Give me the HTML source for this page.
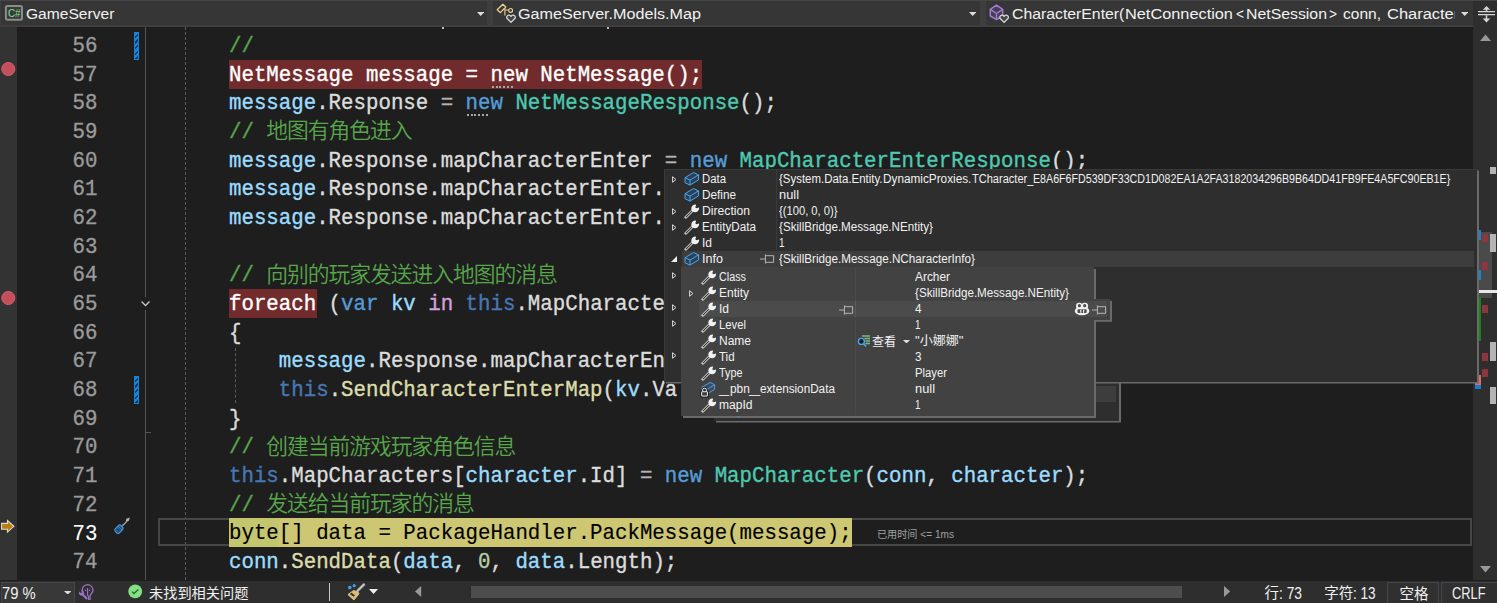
<!DOCTYPE html>
<html lang="zh"><head><meta charset="utf-8"><title>GameServer</title>
<style>
html,body{margin:0;padding:0}
body{width:1497px;height:603px;overflow:hidden;background:#1e1e1e;position:relative;font-family:"Liberation Sans","Noto Sans CJK SC",sans-serif}
body>div,body>span,body>svg{position:absolute;display:block}
.s{white-space:pre;transform-origin:0 50%;font-family:"Liberation Sans","Noto Sans CJK SC",sans-serif}
.m{white-space:pre;font-family:"Liberation Mono","Noto Sans CJK SC",monospace;font-size:20.75px;line-height:28.667px;height:28.667px;color:#dcdcdc;transform:scaleY(1.08);transform-origin:0 19.85px;-webkit-text-stroke:0.35px currentColor}
.ln{color:#9a9a9a}
.c{color:#57a64a}.k{color:#569cd6}.k2{color:#4677b2}.t{color:#4ec9b0}.v{color:#9cdcfe}.f{color:#dcdcaa}.p{color:#b4b4b4}.q{color:#d8a0df}.n{color:#b5cea8}.w{color:#ffffff}.b{color:#000000}
.zc{white-space:pre;font-family:"Liberation Mono","Noto Sans CJK SC",monospace;font-size:21.8px;letter-spacing:-1.05px;line-height:28.667px;height:28.667px;color:#57a64a;font-weight:350}

</style></head>
<body>
<div style="left:0px;top:27px;width:17px;height:553px;background:#333333;"></div>
<div style="left:1473px;top:27px;width:24px;height:553px;background:#2e2e2e;"></div>
<div style="left:145px;top:27px;width:1px;height:270px;background:#555555;"></div>
<div style="left:145px;top:310px;width:1px;height:270px;background:#555555;"></div>
<div style="left:145px;top:432px;width:6px;height:1px;background:#555555;"></div>
<svg style="left:139px;top:298px" width="13" height="12" viewBox="0 0 13 12"><path d="M2.5 3.5 L6.5 7.5 L10.5 3.5" fill="none" stroke="#c8c8c8" stroke-width="1.3"/></svg>
<div style="left:185px;top:27px;width:0;height:553px;border-left:1px dashed #5a5a5a"></div>
<div style="left:235px;top:347.7px;width:0;height:55.3px;border-left:1px dashed #5a5a5a"></div>
<div style="left:134px;top:32.0px;width:5px;height:27.7px;background:repeating-linear-gradient(135deg,#1583d8 0 2.2px,#0b3a63 2.2px 4px);border:1px solid #1583d8;box-sizing:border-box"></div>
<div style="left:134px;top:376.0px;width:5px;height:27.7px;background:repeating-linear-gradient(135deg,#1583d8 0 2.2px,#0b3a63 2.2px 4px);border:1px solid #1583d8;box-sizing:border-box"></div>
<div style="left:229px;top:60.0px;width:473px;height:28.667px;background:#722b2c;"></div>
<div style="left:229px;top:289.336px;width:87.64999999999999px;height:28.667px;background:#722b2c;"></div>
<div style="left:157.6px;top:518.1px;width:1314px;height:28px;border:2px solid #464646;box-sizing:border-box"></div>
<div style="left:229px;top:517.8px;width:622.5px;height:28.9px;background:#cdc673;"></div>
<div style="left:229px;top:517.8px;width:49.8px;height:28.9px;background:#c4c66f;"></div>
<div class="m" style="left:72.5px;top:4.27px;color:#9a9a9a;">55</div>
<div class="m" style="left:72.5px;top:32.93px;color:#9a9a9a;">56</div>
<div class="m" style="left:72.5px;top:61.60px;color:#9a9a9a;">57</div>
<div class="m" style="left:72.5px;top:90.27px;color:#9a9a9a;">58</div>
<div class="m" style="left:72.5px;top:118.93px;color:#9a9a9a;">59</div>
<div class="m" style="left:72.5px;top:147.60px;color:#9a9a9a;">60</div>
<div class="m" style="left:72.5px;top:176.27px;color:#9a9a9a;">61</div>
<div class="m" style="left:72.5px;top:204.94px;color:#9a9a9a;">62</div>
<div class="m" style="left:72.5px;top:233.60px;color:#9a9a9a;">63</div>
<div class="m" style="left:72.5px;top:262.27px;color:#9a9a9a;">64</div>
<div class="m" style="left:72.5px;top:290.94px;color:#9a9a9a;">65</div>
<div class="m" style="left:72.5px;top:319.60px;color:#9a9a9a;">66</div>
<div class="m" style="left:72.5px;top:348.27px;color:#9a9a9a;">67</div>
<div class="m" style="left:72.5px;top:376.94px;color:#9a9a9a;">68</div>
<div class="m" style="left:72.5px;top:405.60px;color:#9a9a9a;">69</div>
<div class="m" style="left:72.5px;top:434.27px;color:#9a9a9a;">70</div>
<div class="m" style="left:72.5px;top:462.94px;color:#9a9a9a;">71</div>
<div class="m" style="left:72.5px;top:491.61px;color:#9a9a9a;">72</div>
<div class="m" style="left:72.5px;top:521.07px;color:#ffffff;-webkit-text-stroke:0.1px #fff;">73</div>
<div class="m" style="left:72.5px;top:548.94px;color:#9a9a9a;">74</div>
<div class="m" style="left:72.5px;top:577.61px;color:#9a9a9a;">75</div>
<div class="m" style="left:229px;top:32.93px"><span class="c">//</span></div>
<div class="m" style="left:229px;top:61.60px"><span class="w">NetMessage message = new NetMessage();</span></div>
<div class="m" style="left:229px;top:90.27px"><span class="v">message</span>.Response <span class="p">=</span> <span class="k">new</span> <span class="t">NetMessageResponse</span>();</div>
<div class="m" style="left:229px;top:118.93px"><span class="c">//</span></div>
<div class="zc" style="left:266.35px;top:119.33px">地图有角色进入</div>
<div class="m" style="left:229px;top:147.60px"><span class="v">message</span>.Response.mapCharacterEnter <span class="p">=</span> <span class="k">new</span> <span class="t">MapCharacterEnterResponse</span>();</div>
<div class="m" style="left:229px;top:176.27px"><span class="v">message</span>.Response.mapCharacterEnter.mapId <span class="p">=</span> <span class="k2">this</span>.Define.ID;</div>
<div class="m" style="left:229px;top:204.94px"><span class="v">message</span>.Response.mapCharacterEnter.Characters.Add(<span class="v">character</span>.Info);</div>
<div class="m" style="left:229px;top:262.27px"><span class="c">//</span></div>
<div class="zc" style="left:266.35px;top:262.67px">向别的玩家发送进入地图的消息</div>
<div class="m" style="left:229px;top:290.94px"><span class="w">foreach</span> (<span class="k">var</span> <span class="v">kv</span> <span class="q">in</span> <span class="k2">this</span>.MapCharacters)</div>
<div class="m" style="left:229px;top:319.60px">{</div>
<div class="m" style="left:229px;top:348.27px">    <span class="v">message</span>.Response.mapCharacterEnter.Characters.Add(<span class="v">kv</span>.Value.Info);</div>
<div class="m" style="left:229px;top:376.94px">    <span class="k2">this</span>.<span class="f">SendCharacterEnterMap</span>(<span class="v">kv</span>.Value.connection, <span class="v">character</span>);</div>
<div class="m" style="left:229px;top:405.60px">}</div>
<div class="m" style="left:229px;top:434.27px"><span class="c">//</span></div>
<div class="zc" style="left:266.35px;top:434.67px">创建当前游戏玩家角色信息</div>
<div class="m" style="left:229px;top:462.94px"><span class="k2">this</span>.MapCharacters[<span class="v">character</span>.Id] <span class="p">=</span> <span class="k">new</span> <span class="t">MapCharacter</span>(<span class="v">conn</span>, <span class="v">character</span>);</div>
<div class="m" style="left:229px;top:491.61px"><span class="c">//</span></div>
<div class="zc" style="left:266.35px;top:492.00px">发送给当前玩家的消息</div>
<div class="m" style="left:229px;top:520.27px"><span class="b" style="-webkit-text-stroke:0.15px #000">byte[] data = PackageHandler.PackMessage(message);</span></div>
<div class="m" style="left:229px;top:548.94px"><span class="v">conn</span>.<span class="f">SendData</span>(<span class="v">data</span>, <span class="n">0</span>, <span class="v">data</span>.Length);</div>
<div style="left:491.7px;top:86px;width:22.4px;height:2px;background:repeating-linear-gradient(90deg,#a8a8a8 0 2px,transparent 2px 3.72px)"></div>
<div style="left:466.7px;top:114.4px;width:22.4px;height:2px;background:repeating-linear-gradient(90deg,#a8a8a8 0 2px,transparent 2px 3.72px)"></div>
<span class="s" style="left:877px;top:526.70px;font-size:10px;line-height:15px;color:#a0a0a0;transform:scaleX(1.0115);">已用时间 &lt;= 1ms</span>
<svg style="left:0px;top:60.5px" width="17" height="16" viewBox="0 0 17 16"><circle cx="8.3" cy="8" r="6.5" fill="#c44f5c" stroke="#e25c6a" stroke-width="1"/></svg>
<svg style="left:0px;top:289.8px" width="17" height="16" viewBox="0 0 17 16"><circle cx="8.3" cy="8" r="6.5" fill="#c44f5c" stroke="#e25c6a" stroke-width="1"/></svg>
<svg style="left:0px;top:519px" width="16" height="16" viewBox="0 0 16 16"><path d="M1.6 4.4 H7.5 V1.5 L13.9 7.3 L7.5 13.1 V10.2 H1.6 Z" fill="#b8800a" stroke="#dedbd0" stroke-width="1.1" stroke-linejoin="miter"/></svg>
<svg style="left:110px;top:514px" width="24" height="24" viewBox="110 514 24 24"><path d="M122.4 525.8 L126.9 521.4" stroke="#a8a8a8" stroke-width="1.3" fill="none"/><g transform="translate(127.8 519.6) rotate(-45)"><path d="M-2.9 0 L-0.4 -1.7 L2.9 0 L-0.4 1.7 Z" fill="#b8b8b8"/></g><g transform="translate(118.95 529.2) rotate(-45)"><rect x="-4.1" y="-2.9" width="8.2" height="5.8" rx="1.9" fill="#23527c" stroke="#4a9be0" stroke-width="1.1"/><path d="M1.5 -2.9 V2.9" stroke="#4a9be0" stroke-width="0.6"/></g></svg>
<div style="left:441.5px;top:27px;width:2px;height:1.5px;background:#bdbdbd;"></div>
<div style="left:606.5px;top:27px;width:2.5px;height:1.8px;background:#bdbdbd;"></div>
<div style="left:0px;top:0px;width:1497px;height:27px;background:#3e3e3e;"></div>
<div style="left:0px;top:0px;width:1497px;height:1px;background:#454545;"></div>
<div style="left:1px;top:1px;width:486px;height:24px;background:#363636;"></div>
<div style="left:493px;top:1px;width:487px;height:24px;background:#363636;"></div>
<div style="left:986px;top:1px;width:487px;height:24px;background:#363636;"></div>
<div style="left:1473px;top:1px;width:24px;height:26px;background:#2e2e2e;"></div>
<svg style="left:476.5px;top:11.5px" width="7.4" height="4" viewBox="0 0 7.4 4"><path d="M0 0 H7.4 L3.7 4 Z" fill="#dcdcdc"/></svg>
<svg style="left:969px;top:11.5px" width="7.4" height="4" viewBox="0 0 7.4 4"><path d="M0 0 H7.4 L3.7 4 Z" fill="#dcdcdc"/></svg>
<svg style="left:1461px;top:11.5px" width="7.4" height="4" viewBox="0 0 7.4 4"><path d="M0 0 H7.4 L3.7 4 Z" fill="#dcdcdc"/></svg>
<svg style="left:3px;top:3px" width="22" height="20" viewBox="3 3 22 20"><rect x="5.9" y="5.9" width="16.1" height="13.8" rx="1.6" fill="#3a3a3a" stroke="#8c8c8c" stroke-width="2"/><text x="7.9" y="17" font-family="Liberation Sans, sans-serif" font-size="11.4" fill="#7ee08a" textLength="12.6" lengthAdjust="spacingAndGlyphs">C#</text></svg>
<span class="s" style="left:26px;top:2.20px;font-size:15.4px;line-height:23px;color:#f1f1f1;transform:scaleX(1.0126);">GameServer</span>
<svg style="left:495px;top:2px" width="24" height="24" viewBox="495 2 24 24"><path d="M497.2 9.75 L502.9 4.3 L505.8 7 L500.3 12.6 Z" fill="none" stroke="#f0d590" stroke-width="1.25" stroke-linejoin="round"/><path d="M504.9 8.6 V15.6 M505.6 10 H508.4" stroke="#f0d590" stroke-width="1.1" fill="none"/><circle cx="510.6" cy="10.4" r="1.9" fill="none" stroke="#f0d590" stroke-width="1.2"/><g transform="translate(505.9 14.4)"><path d="M5.1 8 L1 3.9 A2.2 2.2 0 0 1 5.1 2.1 A2.2 2.2 0 0 1 9.2 3.9 Z" fill="#454545" stroke="#d8d8d8" stroke-width="1.3" stroke-linejoin="round"/></g></svg>
<span class="s" style="left:518px;top:2.20px;font-size:15.4px;line-height:23px;color:#f1f1f1;transform:scaleX(1.0487);">GameServer.Models.Map</span>
<svg style="left:988px;top:2px" width="24" height="24" viewBox="988 2 24 24"><path d="M996.5 5.2 L1002.7 9.3 V16 L996.5 19.6 L990.3 16 V9.3 Z" fill="#463f54" stroke="#a07bd0" stroke-width="1.5" stroke-linejoin="round"/><path d="M990.3 9.3 L996.5 13.5 L1002.7 9.3 M996.5 13.5 V19.6" fill="none" stroke="#a07bd0" stroke-width="1.5" stroke-linejoin="round"/><g transform="translate(999 14.4)"><path d="M5.1 8 L1 3.9 A2.2 2.2 0 0 1 5.1 2.1 A2.2 2.2 0 0 1 9.2 3.9 Z" fill="#454545" stroke="#d8d8d8" stroke-width="1.3" stroke-linejoin="round"/></g></svg>
<div style="left:1000px;top:1px;width:454.6px;height:25px;overflow:hidden"><span class="s" style="position:absolute;left:11.6px;top:0.7px;font-size:15.4px;line-height:24px;color:#f1f1f1;transform:scaleX(1.0260)">CharacterEnter(</span><span class="s" style="position:absolute;left:125.0px;top:0.7px;font-size:15.4px;line-height:24px;color:#f1f1f1;transform:scaleX(1.0601)">NetConnection</span><span class="s" style="position:absolute;left:236.0px;top:0.7px;font-size:15.4px;line-height:24px;color:#f1f1f1;transform:scaleX(0.8895)">&lt;</span><span class="s" style="position:absolute;left:246.0px;top:0.7px;font-size:15.4px;line-height:24px;color:#f1f1f1;transform:scaleX(1.0285)">NetSession</span><span class="s" style="position:absolute;left:329.0px;top:0.7px;font-size:15.4px;line-height:24px;color:#f1f1f1;transform:scaleX(0.8895)">&gt;</span><span class="s" style="position:absolute;left:343.0px;top:0.7px;font-size:15.4px;line-height:24px;color:#f1f1f1;transform:scaleX(1.0087)">conn,</span><span class="s" style="position:absolute;left:387.0px;top:0.7px;font-size:15.4px;line-height:24px;color:#f1f1f1;transform:scaleX(1.0690)">Character character)</span></div>
<svg style="left:1476px;top:4px" width="20" height="20" viewBox="1476 4 20 20"><path d="M1478 11.6 H1495 M1478 14.6 H1495" stroke="#d6d6d6" stroke-width="1.3" fill="none"/><path d="M1486.5 7 V11 M1486.5 15.2 V21" stroke="#d6d6d6" stroke-width="1.5" fill="none"/><path d="M1482.8 9.8 L1486.5 6 L1490.2 9.8 Z M1482.8 18.6 L1486.5 22.4 L1490.2 18.6 Z" fill="#d6d6d6"/></svg>
<svg style="left:1480px;top:34px" width="11" height="7" viewBox="0 0 11 7"><path d="M0 7 L5.5 0.5 L11 7 Z" fill="#999999"/></svg>
<svg style="left:1480px;top:566px" width="11" height="7" viewBox="0 0 11 7"><path d="M0 0 L5.5 6.5 L11 0 Z" fill="#999999"/></svg>
<div style="left:1478px;top:232px;width:14px;height:66px;background:#4a4a4a;"></div>
<div style="left:1477px;top:230px;width:4px;height:10px;background:#1583d8;"></div>
<div style="left:1477px;top:270px;width:4px;height:10px;background:#1583d8;"></div>
<div style="left:1482px;top:234px;width:6px;height:7.5px;background:#8c3740;"></div>
<div style="left:1482px;top:262px;width:6px;height:7.5px;background:#8c3740;"></div>
<div style="left:1482px;top:305px;width:6px;height:7.5px;background:#8c3740;"></div>
<div style="left:1482px;top:353px;width:6px;height:7.5px;background:#8c3740;"></div>
<div style="left:1482px;top:369px;width:6px;height:7.5px;background:#8c3740;"></div>
<div style="left:1490px;top:234px;width:6px;height:17.5px;background:#b4b4b4;"></div>
<div style="left:1490px;top:342px;width:6px;height:18.5px;background:#b4b4b4;"></div>
<div style="left:1490px;top:387px;width:6px;height:17px;background:#b4b4b4;"></div>
<div style="left:1490px;top:167px;width:6px;height:7.3px;background:#b4b4b4;"></div>
<div style="left:1477px;top:290px;width:20px;height:3px;background:#e8e8e8;"></div>
<div style="left:1477px;top:297px;width:4px;height:44px;background:#128712;"></div>
<div style="left:1477.2px;top:375px;width:3.5px;height:9.7px;background:#e86868;"></div>
<div style="left:1474.7px;top:382.2px;width:6px;height:2.5px;background:#e86868;"></div>
<div style="left:1474.7px;top:384.7px;width:6px;height:3.9px;background:#0f7fd6;"></div>
<div style="left:0px;top:580.6px;width:1497px;height:23px;background:#2e2e2e;"></div>
<div style="left:0.5px;top:581.6px;width:74px;height:23px;background:#383838;border:1px solid #474747;box-sizing:border-box"></div>
<span class="s" style="left:2.3px;top:582.10px;font-size:15.8px;line-height:24px;color:#f1f1f1;transform:scaleX(0.9358);">79 %</span>
<svg style="left:63.8px;top:590.7px" width="7.4" height="3.6" viewBox="0 0 7.4 3.6"><path d="M0 0 H7.4 L3.7 3.6 Z" fill="#dcdcdc"/></svg>
<svg style="left:76px;top:582px" width="20" height="20" viewBox="76 582 20 20"><path d="M82.7 591.6 A5.2 5.2 0 1 1 91.1 593.8 L90.1 595.4 V600" fill="none" stroke="#9d72c8" stroke-width="1.25"/><path d="M87.6 588 V595.2 L88.6 596.4 V600 M85 589.6 L86 591 M90.2 589.6 L89.2 591" fill="none" stroke="#9d72c8" stroke-width="1.1"/><path d="M79.4 591.6 A2.6 2.6 0 0 0 82.2 595.6 L86.4 599.8 L87.9 598.3 L83.8 594.1 A2.6 2.6 0 0 0 80.9 590.4 L82.2 592.2 L81 593.3 Z" fill="#9d72c8"/></svg>
<svg style="left:128px;top:584px" width="15" height="15" viewBox="0 0 15 15"><circle cx="7.2" cy="7.4" r="6.9" fill="#84de84"/><path d="M4 7.6 L5.9 9.5 L10.4 5.5" fill="none" stroke="#2a6a2a" stroke-width="1.3"/></svg>
<span class="s" style="left:148.5px;top:583.20px;font-size:14.2px;line-height:21px;color:#f1f1f1;transform:scaleX(1.0010);">未找到相关问题</span>
<div style="left:329px;top:583px;width:1px;height:18px;background:#c8c8c8;"></div>
<svg style="left:345px;top:582px" width="22" height="20" viewBox="345 582 22 20"><path d="M363.9 584.6 L357.6 590.8" stroke="#8a8a8a" stroke-width="2.8" stroke-linecap="round" fill="none"/><path d="M363.9 584.6 L357.6 590.8" stroke="#c9c9c9" stroke-width="1.6" stroke-linecap="round" fill="none"/><path d="M353.6 590.4 L358.3 592.2 L359 593.9 L353.9 600 L347.9 594.6 Z" fill="#d9bc7c" stroke="#e6cf97" stroke-width="0.8" stroke-linejoin="round"/><path d="M350.6 593.4 L354.4 596" stroke="#3a3320" stroke-width="2"/><circle cx="349.8" cy="587.6" r="1.8" fill="#3f9fef"/><circle cx="354.2" cy="585.7" r="1.6" fill="#3f9fef"/></svg>
<svg style="left:369px;top:589px" width="9" height="5" viewBox="0 0 9 5"><path d="M0 0 H9 L4.5 5 Z" fill="#f1f1f1"/></svg>
<svg style="left:415px;top:586px" width="7" height="11" viewBox="0 0 7 11"><path d="M6.2 0 V11 L0 5.5 Z" fill="#999999"/></svg>
<svg style="left:1224px;top:586px" width="7" height="11" viewBox="0 0 7 11"><path d="M0 0 V11 L6.2 5.5 Z" fill="#999999"/></svg>
<div style="left:471px;top:586px;width:711px;height:12px;background:#4d4d4d;"></div>
<span class="s" style="left:1264.5px;top:582.40px;font-size:14.5px;line-height:22px;color:#f1f1f1;">行</span>
<span class="s" style="left:1279.3px;top:581.40px;font-size:16.2px;line-height:24px;color:#f1f1f1;transform:scaleX(0.8512);">: 73</span>
<span class="s" style="left:1324.3px;top:582.40px;font-size:14.5px;line-height:22px;color:#f1f1f1;transform:scaleX(1.0000);">字符</span>
<span class="s" style="left:1353.3px;top:581.40px;font-size:16.2px;line-height:24px;color:#f1f1f1;transform:scaleX(0.8401);">: 13</span>
<div style="left:1387.4px;top:581.5px;width:52px;height:23px;background:#303030;border:1px solid #45454a;box-sizing:border-box"></div>
<div style="left:1440.6px;top:581.5px;width:57px;height:23px;background:#303030;border:1px solid #45454a;box-sizing:border-box"></div>
<span class="s" style="left:1399.5px;top:582.60px;font-size:14.5px;line-height:22px;color:#f1f1f1;transform:scaleX(1.0000);">空格</span>
<span class="s" style="left:1452.4px;top:581.70px;font-size:15.6px;line-height:23px;color:#f1f1f1;transform:scaleX(0.8248);">CRLF</span>
<div style="left:714.2px;top:300px;width:405px;height:121px;background:#2e2e2e;box-shadow:2px 1.5px 0 #6a6a6a"></div>
<div style="left:733px;top:386px;width:383px;height:15.5px;background:#3d3d3d;"></div>
<div style="left:664.4px;top:168.6px;width:812.5px;height:213.4px;background:#2e2e2e;border:1px solid #3a3a3a;border-right:none;border-bottom:none;box-sizing:border-box;box-shadow:2px 1.5px 0 #6a6a6a"></div>
<div style="left:776px;top:170px;width:1px;height:80px;background:#3a3a3a;"></div>
<div style="left:682px;top:251px;width:792px;height:16px;background:#3d3d3d;"></div>
<svg style="left:671.8px;top:175.8px" width="6" height="8" viewBox="0 0 6 8"><path d="M0.6 0.7 L3.9 3.5 L0.6 6.3 Z" fill="none" stroke="#dadada" stroke-width="1"/></svg>
<svg style="left:683.5px;top:171px" width="16" height="16" viewBox="0 0 16 16"><path d="M1 6.7 L9.6 1.5 L14.5 3.9 V8.9 L6 14.1 L1 11.7 Z" fill="#2b4158" stroke="#4ba6f0" stroke-width="1" stroke-linejoin="round"/><path d="M1 6.7 L6 9.1 L14.5 3.9 M6 9.1 V14.1" fill="none" stroke="#4ba6f0" stroke-width="1" stroke-linejoin="round"/></svg>
<span class="s" style="left:702px;top:170.00px;font-size:12px;line-height:18px;color:#f1f1f1;transform:scaleX(0.9468);">Data</span>
<span class="s" style="left:779px;top:170.00px;font-size:12px;line-height:18px;color:#f1f1f1;transform:scaleX(0.9545);">{System.Data.Entity.</span>
<span class="s" style="left:883.4px;top:170.00px;font-size:12px;line-height:18px;color:#f1f1f1;transform:scaleX(0.9819);">DynamicProxies.</span>
<span class="s" style="left:971.8px;top:170.00px;font-size:12px;line-height:18px;color:#f1f1f1;transform:scaleX(0.9206);">TCharacter_</span>
<span class="s" style="left:1033.2px;top:170.00px;font-size:12px;line-height:18px;color:#f1f1f1;transform:scaleX(0.8884);">E8A6F6FD539DF33CD1D082EA1A2FA3182034296B9B64DD41FB9FE4A5FC90EB1E}</span>
<svg style="left:683.5px;top:187px" width="16" height="16" viewBox="0 0 16 16"><path d="M1 6.7 L9.6 1.5 L14.5 3.9 V8.9 L6 14.1 L1 11.7 Z" fill="#2b4158" stroke="#4ba6f0" stroke-width="1" stroke-linejoin="round"/><path d="M1 6.7 L6 9.1 L14.5 3.9 M6 9.1 V14.1" fill="none" stroke="#4ba6f0" stroke-width="1" stroke-linejoin="round"/></svg>
<span class="s" style="left:702px;top:186.00px;font-size:12px;line-height:18px;color:#f1f1f1;transform:scaleX(0.9802);">Define</span>
<span class="s" style="left:779px;top:186.00px;font-size:12px;line-height:18px;color:#f1f1f1;transform:scaleX(1.0706);">null</span>
<svg style="left:671.8px;top:207.8px" width="6" height="8" viewBox="0 0 6 8"><path d="M0.6 0.7 L3.9 3.5 L0.6 6.3 Z" fill="none" stroke="#dadada" stroke-width="1"/></svg>
<svg style="left:683.5px;top:203px" width="16" height="16" viewBox="0 0 16 16"><path d="M1.8 14.2 L8.8 7.4" stroke="#e0e0e0" stroke-width="2.7" stroke-linecap="round" fill="none"/><path d="M2 14 L8 8.2" stroke="#3a3a3a" stroke-width="1.05" stroke-linecap="round" fill="none"/><path d="M12.2 1.7 L11.3 4.2 L12.4 5.3 L14.9 4.4 A3.85 3.85 0 1 1 12.2 1.7 Z" fill="#f0f0f0"/></svg>
<span class="s" style="left:702px;top:202.00px;font-size:12px;line-height:18px;color:#f1f1f1;transform:scaleX(1.0137);">Direction</span>
<span class="s" style="left:779px;top:202.00px;font-size:12px;line-height:18px;color:#f1f1f1;transform:scaleX(0.9328);">{(100, 0, 0)}</span>
<svg style="left:671.8px;top:223.8px" width="6" height="8" viewBox="0 0 6 8"><path d="M0.6 0.7 L3.9 3.5 L0.6 6.3 Z" fill="none" stroke="#dadada" stroke-width="1"/></svg>
<svg style="left:683.5px;top:219px" width="16" height="16" viewBox="0 0 16 16"><path d="M1.8 14.2 L8.8 7.4" stroke="#e0e0e0" stroke-width="2.7" stroke-linecap="round" fill="none"/><path d="M2 14 L8 8.2" stroke="#3a3a3a" stroke-width="1.05" stroke-linecap="round" fill="none"/><path d="M12.2 1.7 L11.3 4.2 L12.4 5.3 L14.9 4.4 A3.85 3.85 0 1 1 12.2 1.7 Z" fill="#f0f0f0"/></svg>
<span class="s" style="left:702px;top:218.00px;font-size:12px;line-height:18px;color:#f1f1f1;transform:scaleX(0.9754);">EntityData</span>
<span class="s" style="left:779px;top:218.00px;font-size:12px;line-height:18px;color:#f1f1f1;transform:scaleX(0.9701);">{SkillBridge.Message.NEntity}</span>
<svg style="left:683.5px;top:235px" width="16" height="16" viewBox="0 0 16 16"><path d="M1.8 14.2 L8.8 7.4" stroke="#e0e0e0" stroke-width="2.7" stroke-linecap="round" fill="none"/><path d="M2 14 L8 8.2" stroke="#3a3a3a" stroke-width="1.05" stroke-linecap="round" fill="none"/><path d="M12.2 1.7 L11.3 4.2 L12.4 5.3 L14.9 4.4 A3.85 3.85 0 1 1 12.2 1.7 Z" fill="#f0f0f0"/></svg>
<span class="s" style="left:702px;top:234.00px;font-size:12px;line-height:18px;color:#f1f1f1;transform:scaleX(0.9992);">Id</span>
<span class="s" style="left:779px;top:234.00px;font-size:12px;line-height:18px;color:#f1f1f1;transform:scaleX(0.8241);">1</span>
<svg style="left:670px;top:255px" width="8" height="8" viewBox="0 0 8 8"><path d="M7 1 V7 H1 Z" fill="#f0f0f0"/></svg>
<svg style="left:683.5px;top:251px" width="16" height="16" viewBox="0 0 16 16"><path d="M1 6.7 L9.6 1.5 L14.5 3.9 V8.9 L6 14.1 L1 11.7 Z" fill="#2b4158" stroke="#4ba6f0" stroke-width="1" stroke-linejoin="round"/><path d="M1 6.7 L6 9.1 L14.5 3.9 M6 9.1 V14.1" fill="none" stroke="#4ba6f0" stroke-width="1" stroke-linejoin="round"/></svg>
<span class="s" style="left:702px;top:250.00px;font-size:12px;line-height:18px;color:#f1f1f1;transform:scaleX(1.0492);">Info</span>
<span class="s" style="left:779px;top:250.00px;font-size:12px;line-height:18px;color:#f1f1f1;transform:scaleX(0.9730);">{SkillBridge.Message.NCharacterInfo}</span>
<svg style="left:760.2px;top:254.39999999999998px" width="15" height="10" viewBox="0 0 15 10"><path d="M0 5 H5.4 M5.4 0.4 V9.6 M5.4 1.7 H13.6 V8.3 H5.4" fill="none" stroke="#b4b4b4" stroke-width="1"/></svg>
<svg style="left:671.8px;top:271.8px" width="6" height="8" viewBox="0 0 6 8"><path d="M0.6 0.7 L3.9 3.5 L0.6 6.3 Z" fill="none" stroke="#dadada" stroke-width="1"/></svg>
<svg style="left:671.8px;top:303.8px" width="6" height="8" viewBox="0 0 6 8"><path d="M0.6 0.7 L3.9 3.5 L0.6 6.3 Z" fill="none" stroke="#dadada" stroke-width="1"/></svg>
<svg style="left:671.8px;top:319.8px" width="6" height="8" viewBox="0 0 6 8"><path d="M0.6 0.7 L3.9 3.5 L0.6 6.3 Z" fill="none" stroke="#dadada" stroke-width="1"/></svg>
<svg style="left:671.8px;top:351.8px" width="6" height="8" viewBox="0 0 6 8"><path d="M0.6 0.7 L3.9 3.5 L0.6 6.3 Z" fill="none" stroke="#dadada" stroke-width="1"/></svg>
<div style="left:681px;top:267.1px;width:413.2px;height:148.7px;background:#424242;box-shadow:2px 2px 0 #6a6a6a"></div>
<div style="left:855px;top:269px;width:1px;height:146px;background:#4a4a4a;"></div>
<div style="left:1094.2px;top:299.2px;width:15.6px;height:20.9px;background:#424242;box-shadow:2px 1.8px 0 #6a6a6a"></div>
<div style="left:1094.2px;top:301px;width:1.9px;height:14px;background:#424242;"></div>
<div style="left:699px;top:300.8px;width:408px;height:16.1px;background:#4b4b4b;"></div>
<div style="left:855px;top:301px;width:1px;height:16px;background:#5a5a5a;"></div>
<svg style="left:700.5px;top:269px" width="16" height="16" viewBox="0 0 16 16"><path d="M1.8 14.2 L8.8 7.4" stroke="#e0e0e0" stroke-width="2.7" stroke-linecap="round" fill="none"/><path d="M2 14 L8 8.2" stroke="#3a3a3a" stroke-width="1.05" stroke-linecap="round" fill="none"/><path d="M12.2 1.7 L11.3 4.2 L12.4 5.3 L14.9 4.4 A3.85 3.85 0 1 1 12.2 1.7 Z" fill="#f0f0f0"/></svg>
<span class="s" style="left:719px;top:268.00px;font-size:12px;line-height:18px;color:#f1f1f1;transform:scaleX(0.8998);">Class</span>
<span class="s" style="left:915px;top:268.00px;font-size:12px;line-height:18px;color:#f1f1f1;transform:scaleX(0.9902);">Archer</span>
<svg style="left:688.8px;top:289.8px" width="6" height="8" viewBox="0 0 6 8"><path d="M0.6 0.7 L3.9 3.5 L0.6 6.3 Z" fill="none" stroke="#dadada" stroke-width="1"/></svg>
<svg style="left:700.5px;top:285px" width="16" height="16" viewBox="0 0 16 16"><path d="M1.8 14.2 L8.8 7.4" stroke="#e0e0e0" stroke-width="2.7" stroke-linecap="round" fill="none"/><path d="M2 14 L8 8.2" stroke="#3a3a3a" stroke-width="1.05" stroke-linecap="round" fill="none"/><path d="M12.2 1.7 L11.3 4.2 L12.4 5.3 L14.9 4.4 A3.85 3.85 0 1 1 12.2 1.7 Z" fill="#f0f0f0"/></svg>
<span class="s" style="left:719px;top:284.00px;font-size:12px;line-height:18px;color:#f1f1f1;transform:scaleX(0.9996);">Entity</span>
<span class="s" style="left:915px;top:284.00px;font-size:12px;line-height:18px;color:#f1f1f1;transform:scaleX(0.9701);">{SkillBridge.Message.NEntity}</span>
<svg style="left:700.5px;top:301px" width="16" height="16" viewBox="0 0 16 16"><path d="M1.8 14.2 L8.8 7.4" stroke="#e0e0e0" stroke-width="2.7" stroke-linecap="round" fill="none"/><path d="M2 14 L8 8.2" stroke="#3a3a3a" stroke-width="1.05" stroke-linecap="round" fill="none"/><path d="M12.2 1.7 L11.3 4.2 L12.4 5.3 L14.9 4.4 A3.85 3.85 0 1 1 12.2 1.7 Z" fill="#f0f0f0"/></svg>
<span class="s" style="left:719px;top:300.00px;font-size:12px;line-height:18px;color:#f1f1f1;transform:scaleX(0.9992);">Id</span>
<span class="s" style="left:915px;top:300.00px;font-size:12px;line-height:18px;color:#f1f1f1;transform:scaleX(0.9739);">4</span>
<svg style="left:700.5px;top:317px" width="16" height="16" viewBox="0 0 16 16"><path d="M1.8 14.2 L8.8 7.4" stroke="#e0e0e0" stroke-width="2.7" stroke-linecap="round" fill="none"/><path d="M2 14 L8 8.2" stroke="#3a3a3a" stroke-width="1.05" stroke-linecap="round" fill="none"/><path d="M12.2 1.7 L11.3 4.2 L12.4 5.3 L14.9 4.4 A3.85 3.85 0 1 1 12.2 1.7 Z" fill="#f0f0f0"/></svg>
<span class="s" style="left:719px;top:316.00px;font-size:12px;line-height:18px;color:#f1f1f1;transform:scaleX(0.9411);">Level</span>
<span class="s" style="left:915px;top:316.00px;font-size:12px;line-height:18px;color:#f1f1f1;transform:scaleX(0.8241);">1</span>
<svg style="left:700.5px;top:333px" width="16" height="16" viewBox="0 0 16 16"><path d="M1.8 14.2 L8.8 7.4" stroke="#e0e0e0" stroke-width="2.7" stroke-linecap="round" fill="none"/><path d="M2 14 L8 8.2" stroke="#3a3a3a" stroke-width="1.05" stroke-linecap="round" fill="none"/><path d="M12.2 1.7 L11.3 4.2 L12.4 5.3 L14.9 4.4 A3.85 3.85 0 1 1 12.2 1.7 Z" fill="#f0f0f0"/></svg>
<span class="s" style="left:719px;top:332.00px;font-size:12px;line-height:18px;color:#f1f1f1;transform:scaleX(0.9997);">Name</span>
<span class="s" style="left:915px;top:332.00px;font-size:12px;line-height:18px;color:#f1f1f1;transform:scaleX(1.0894);">&quot;小娜娜&quot;</span>
<svg style="left:700.5px;top:349px" width="16" height="16" viewBox="0 0 16 16"><path d="M1.8 14.2 L8.8 7.4" stroke="#e0e0e0" stroke-width="2.7" stroke-linecap="round" fill="none"/><path d="M2 14 L8 8.2" stroke="#3a3a3a" stroke-width="1.05" stroke-linecap="round" fill="none"/><path d="M12.2 1.7 L11.3 4.2 L12.4 5.3 L14.9 4.4 A3.85 3.85 0 1 1 12.2 1.7 Z" fill="#f0f0f0"/></svg>
<span class="s" style="left:719px;top:348.00px;font-size:12px;line-height:18px;color:#f1f1f1;transform:scaleX(0.9598);">Tid</span>
<span class="s" style="left:915px;top:348.00px;font-size:12px;line-height:18px;color:#f1f1f1;transform:scaleX(0.9739);">3</span>
<svg style="left:700.5px;top:365px" width="16" height="16" viewBox="0 0 16 16"><path d="M1.8 14.2 L8.8 7.4" stroke="#e0e0e0" stroke-width="2.7" stroke-linecap="round" fill="none"/><path d="M2 14 L8 8.2" stroke="#3a3a3a" stroke-width="1.05" stroke-linecap="round" fill="none"/><path d="M12.2 1.7 L11.3 4.2 L12.4 5.3 L14.9 4.4 A3.85 3.85 0 1 1 12.2 1.7 Z" fill="#f0f0f0"/></svg>
<span class="s" style="left:719px;top:364.00px;font-size:12px;line-height:18px;color:#f1f1f1;transform:scaleX(0.8996);">Type</span>
<span class="s" style="left:915px;top:364.00px;font-size:12px;line-height:18px;color:#f1f1f1;transform:scaleX(0.9408);">Player</span>
<svg style="left:701.2px;top:381.4px" width="15" height="15" viewBox="0 0 16 16"><path d="M1 6.7 L9.6 1.5 L14.5 3.9 V8.9 L6 14.1 L1 11.7 Z" fill="#3b4c5e" stroke="#4ba6f0" stroke-width="1" stroke-linejoin="round"/><path d="M1 6.7 L6 9.1 L14.5 3.9 M6 9.1 V14.1" fill="none" stroke="#4ba6f0" stroke-width="1" stroke-linejoin="round"/></svg>
<svg style="left:699.8px;top:386.8px" width="10" height="10.9" viewBox="0 0 11 12"><rect x="1.2" y="4.6" width="7.6" height="6" rx="0.8" fill="#1a1a1a" stroke="#1a1a1a" stroke-width="2"/><path d="M2.9 4.8 V3.4 A2.1 2.1 0 0 1 7.1 3.4 V4.8" fill="none" stroke="#1a1a1a" stroke-width="2.6"/><rect x="1.8" y="5.2" width="6.4" height="4.8" rx="0.5" fill="#3a3a3a" stroke="#f2f2f2" stroke-width="1.1"/><path d="M2.9 5 V3.4 A2.1 2.1 0 0 1 7.1 3.4 V5" fill="none" stroke="#f2f2f2" stroke-width="1.1"/></svg>
<span class="s" style="left:719.3px;top:380.00px;font-size:12px;line-height:18px;color:#f1f1f1;transform:scaleX(0.7642);">__</span>
<span class="s" style="left:729.5px;top:380.00px;font-size:12px;line-height:18px;color:#f1f1f1;transform:scaleX(0.9889);">pbn</span>
<span class="s" style="left:749.3px;top:380.00px;font-size:12px;line-height:18px;color:#f1f1f1;transform:scaleX(0.8316);">__</span>
<span class="s" style="left:760.4px;top:380.00px;font-size:12px;line-height:18px;color:#f1f1f1;transform:scaleX(0.9763);">extensionData</span>
<span class="s" style="left:915px;top:380.00px;font-size:12px;line-height:18px;color:#f1f1f1;transform:scaleX(1.0706);">null</span>
<svg style="left:700.5px;top:397px" width="16" height="16" viewBox="0 0 16 16"><path d="M1.8 14.2 L8.8 7.4" stroke="#e0e0e0" stroke-width="2.7" stroke-linecap="round" fill="none"/><path d="M2 14 L8 8.2" stroke="#3a3a3a" stroke-width="1.05" stroke-linecap="round" fill="none"/><path d="M12.2 1.7 L11.3 4.2 L12.4 5.3 L14.9 4.4 A3.85 3.85 0 1 1 12.2 1.7 Z" fill="#f0f0f0"/></svg>
<span class="s" style="left:719px;top:396.00px;font-size:12px;line-height:18px;color:#f1f1f1;transform:scaleX(1.0044);">mapId</span>
<span class="s" style="left:915px;top:396.00px;font-size:12px;line-height:18px;color:#f1f1f1;transform:scaleX(0.8241);">1</span>
<svg style="left:838.8px;top:304.9px" width="15" height="10" viewBox="0 0 15 10"><path d="M0 5 H5.4 M5.4 0.4 V9.6 M5.4 1.7 H13.6 V8.3 H5.4" fill="none" stroke="#b4b4b4" stroke-width="1"/></svg>
<svg style="left:1091.8px;top:304.9px" width="15" height="10" viewBox="0 0 15 10"><path d="M0 5 H5.4 M5.4 0.4 V9.6 M5.4 1.7 H13.6 V8.3 H5.4" fill="none" stroke="#b4b4b4" stroke-width="1"/></svg>
<svg style="left:1073px;top:301px" width="18" height="16" viewBox="1073 301 18 16"><circle cx="1079.3" cy="306" r="3.3" fill="#f0f0f0"/><circle cx="1084.8" cy="306" r="3.3" fill="#f0f0f0"/><ellipse cx="1082.05" cy="310.9" rx="7.3" ry="4.3" fill="#f0f0f0"/><circle cx="1079.4" cy="305.7" r="1.6" fill="#4b4b4b"/><circle cx="1084.7" cy="305.7" r="1.6" fill="#4b4b4b"/><rect x="1077.5" y="309.3" width="9.1" height="3.8" rx="1" fill="#4b4b4b"/><rect x="1080.2" y="309.6" width="1.2" height="3.2" fill="#f0f0f0"/><rect x="1083" y="309.6" width="1.2" height="3.2" fill="#f0f0f0"/></svg>
<div style="left:737px;top:416.3px;width:3px;height:1px;background:#4a7fae;"></div>
<svg style="left:857px;top:334px" width="14" height="14" viewBox="0 0 14 14"><path d="M5 2 H13 M7.5 4.5 H13 M8.5 7 H13 M8.5 9.5 H13" stroke="#7fba7f" stroke-width="1.4"/><circle cx="4.4" cy="7.4" r="3" fill="#1e1e1e" stroke="#4aa6ee" stroke-width="1.4"/><path d="M6.6 9.8 L9 12.4" stroke="#4aa6ee" stroke-width="1.6"/></svg>
<span class="s" style="left:872px;top:333.00px;font-size:12px;line-height:18px;color:#f1f1f1;transform:scaleX(1.0000);">查看</span>
<svg style="left:902.5px;top:339.5px" width="7" height="3.5" viewBox="0 0 7 3.5"><path d="M0 0 H7 L3.5 3.5 Z" fill="#e0e0e0"/></svg>
</body></html>
